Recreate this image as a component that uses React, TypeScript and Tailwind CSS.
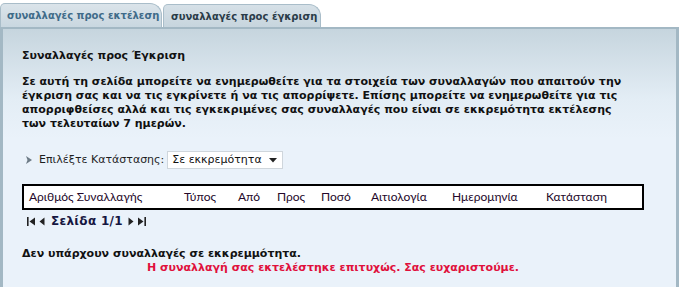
export default function App() {
  const cols = [
    { label: "Αριθμός Συναλλαγής", w: "w-[155px]" },
    { label: "Τύπος", w: "w-[54px]" },
    { label: "Από", w: "w-[39px]" },
    { label: "Προς", w: "w-[44px]" },
    { label: "Ποσό", w: "w-[50px]" },
    { label: "Αιτιολογία", w: "w-[81px]" },
    { label: "Ημερομηνία", w: "w-[94px]" },
    { label: "Κατάσταση", w: "w-[90px]" },
  ];

  return (
    <div className="w-[679px] h-[287px] bg-white overflow-hidden font-['DejaVu_Sans',Verdana,sans-serif] text-[11px]">
      {/* tabs */}
      <div className="flex items-end h-[27px]">
        <div className="w-[162px] h-[24px] rounded-tl-[5px] rounded-tr-[12px] border border-b-0 border-[#a9bdc9] bg-gradient-to-b from-[#dbe4ea] to-[#c9d7e0] flex items-center pl-[6px] font-bold text-[10px] text-[#3f6b89] whitespace-nowrap">
          συναλλαγές προς εκτέλεση
        </div>
        <div className="ml-[1px] w-[158px] h-[23px] rounded-tl-[5px] rounded-tr-[12px] border border-b-0 border-[#a9bdc9] bg-gradient-to-b from-[#d6e0e7] to-[#c7d5de] flex items-center pl-[7px] font-bold text-[10px] text-[#2a3b48] whitespace-nowrap">
          συναλλαγές προς έγκριση
        </div>
      </div>

      {/* panel */}
      <div className="h-[260px] border-t-2 border-x-[3px] border-[#a3b8c4] bg-[linear-gradient(to_bottom,#c6d5de_0px,#e3edf5_70px,#eaf2fa_110px)] pl-[19px] pt-[19px]">
        <div className="w-[622px] text-[#111]">
          <div className="font-bold leading-[15px]">Συναλλαγές προς Έγκριση</div>

          <p className="mt-[12px] font-bold leading-[14px]">
            Σε αυτή τη σελίδα μπορείτε να ενημερωθείτε για τα στοιχεία των συναλλαγών που απαιτούν την
            <br />
            έγκριση σας και να τις εγκρίνετε ή να τις απορρίψετε. Επίσης μπορείτε να ενημερωθείτε για τις
            <br />
            απορριφθείσες αλλά και τις εγκεκριμένες σας συναλλαγές που είναι σε εκκρεμότητα εκτέλεσης
            <br />
            των τελευταίων 7 ημερών.
          </p>

          {/* status select */}
          <div className="mt-[20px] flex items-center h-[18px]">
            <svg width="8" height="10" viewBox="0 0 8 10" className="ml-[3px]">
              <path d="M1 1 L7 5 L1 9 L2.5 5 Z" fill="#6d7b86" />
            </svg>
            <span className="ml-[6px] text-[#1e1e1e]">Επιλέξτε Κατάστασης:</span>
            <div className="ml-[3px] w-[116px] h-[18px] bg-white border border-[#cfd6dc] flex items-center justify-between pl-[4px] pr-[5px] text-[#111]">
              <span>Σε εκκρεμότητα</span>
              <svg width="8" height="5" viewBox="0 0 8 5">
                <path d="M0 0 H8 L4 4.5 Z" fill="#222" />
              </svg>
            </div>
          </div>

          {/* table header */}
          <div className="mt-[15px] h-[26px] border-2 border-black bg-white flex items-center pl-[5px] text-[#24082a] font-['Lato','Open_Sans',sans-serif] text-[12px] whitespace-nowrap">
            {cols.map((c) => (
              <div key={c.label} className={c.w}>
                {c.label}
              </div>
            ))}
          </div>

          {/* pager */}
          <div className="mt-[3px] h-[16px] flex items-center pl-[5px] text-[#151540]">
            <svg width="9" height="9" viewBox="0 0 9 9">
              <rect x="0" y="0" width="1.6" height="9" fill="#222" />
              <path d="M8 0.5 V8.5 L2.5 4.5 Z" fill="#222" />
            </svg>
            <svg width="6" height="9" viewBox="0 0 6 9" className="ml-[3px]">
              <path d="M5.5 0.5 V8.5 L0.5 4.5 Z" fill="#222" />
            </svg>
            <span className="ml-[6px] font-bold text-[12px] tracking-[0.3px]">Σελίδα 1/1</span>
            <svg width="6" height="9" viewBox="0 0 6 9" className="ml-[5px]">
              <path d="M0.5 0.5 V8.5 L5.5 4.5 Z" fill="#222" />
            </svg>
            <svg width="9" height="9" viewBox="0 0 9 9" className="ml-[3px]">
              <path d="M1 0.5 V8.5 L6.5 4.5 Z" fill="#222" />
              <rect x="7.4" y="0" width="1.6" height="9" fill="#222" />
            </svg>
          </div>

          <div className="mt-[18px] font-bold leading-[14px]">Δεν υπάρχουν συναλλαγές σε εκκρεμμότητα.</div>
          <div className="text-center font-bold leading-[14px] text-[#e0103c]">
            Η συναλλαγή σας εκτελέστηκε επιτυχώς. Σας ευχαριστούμε.
          </div>
        </div>
      </div>
    </div>
  );
}
